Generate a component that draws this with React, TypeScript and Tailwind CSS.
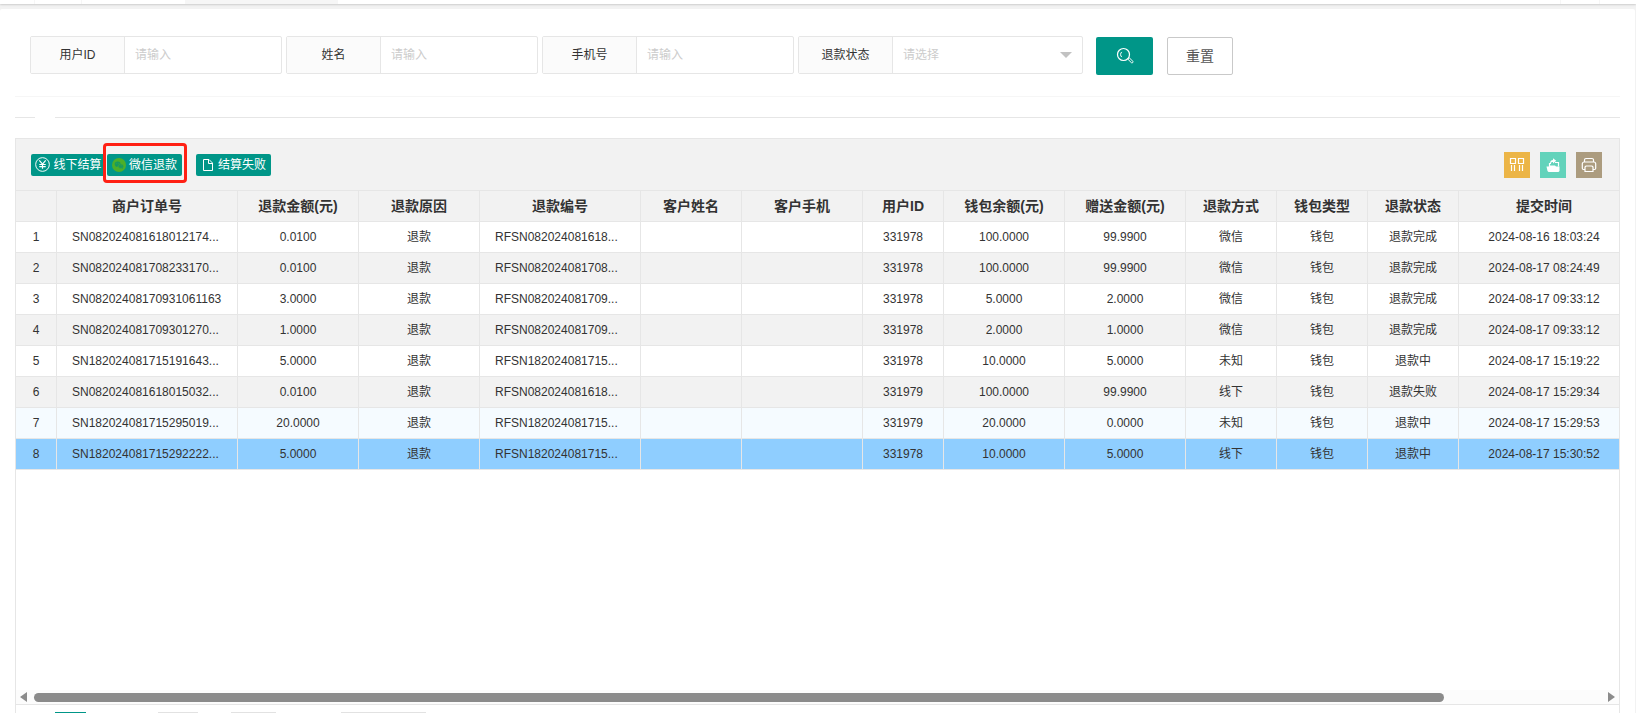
import type { ReactNode } from 'react';

interface Refund {
  orderNo: string;
  amount: string;
  reason: string;
  refundNo: string;
  customerName: string;
  customerPhone: string;
  userId: string;
  balance: string;
  gift: string;
  method: string;
  wallet: string;
  status: string;
  submittedAt: string;
}

interface Column {
  key: keyof Refund;
  title: string;
  width: string;
  cell?: string;
}

const columns: Column[] = [
  { key: 'orderNo', title: '商户订单号', width: 'w-[181px]', cell: 'pl-[15px] text-left' },
  { key: 'amount', title: '退款金额(元)', width: 'w-[121px]' },
  { key: 'reason', title: '退款原因', width: 'w-[121px]' },
  { key: 'refundNo', title: '退款编号', width: 'w-[161px]', cell: 'pl-[15px] text-left' },
  { key: 'customerName', title: '客户姓名', width: 'w-[101px]' },
  { key: 'customerPhone', title: '客户手机', width: 'w-[121px]' },
  { key: 'userId', title: '用户ID', width: 'w-[81px]' },
  { key: 'balance', title: '钱包余额(元)', width: 'w-[121px]' },
  { key: 'gift', title: '赠送金额(元)', width: 'w-[121px]' },
  { key: 'method', title: '退款方式', width: 'w-[91px]' },
  { key: 'wallet', title: '钱包类型', width: 'w-[91px]' },
  { key: 'status', title: '退款状态', width: 'w-[91px]' },
  { key: 'submittedAt', title: '提交时间', width: 'w-[171px]' },
];

const refund = (
  orderNo: string,
  amount: string,
  refundNo: string,
  userId: string,
  balance: string,
  gift: string,
  method: string,
  status: string,
  submittedAt: string
): Refund => ({
  orderNo,
  amount,
  reason: '退款',
  refundNo,
  customerName: '',
  customerPhone: '',
  userId,
  balance,
  gift,
  method,
  wallet: '钱包',
  status,
  submittedAt,
});

const refunds: Refund[] = [
  refund('SN082024081618012174...', '0.0100', 'RFSN082024081618...', '331978', '100.0000', '99.9900', '微信', '退款完成', '2024-08-16 18:03:24'),
  refund('SN082024081708233170...', '0.0100', 'RFSN082024081708...', '331978', '100.0000', '99.9900', '微信', '退款完成', '2024-08-17 08:24:49'),
  refund('SN08202408170931061163', '3.0000', 'RFSN082024081709...', '331978', '5.0000', '2.0000', '微信', '退款完成', '2024-08-17 09:33:12'),
  refund('SN082024081709301270...', '1.0000', 'RFSN082024081709...', '331978', '2.0000', '1.0000', '微信', '退款完成', '2024-08-17 09:33:12'),
  refund('SN182024081715191643...', '5.0000', 'RFSN182024081715...', '331978', '10.0000', '5.0000', '未知', '退款中', '2024-08-17 15:19:22'),
  refund('SN082024081618015032...', '0.0100', 'RFSN082024081618...', '331979', '100.0000', '99.9900', '线下', '退款失败', '2024-08-17 15:29:34'),
  refund('SN182024081715295019...', '20.0000', 'RFSN182024081715...', '331979', '20.0000', '0.0000', '未知', '退款中', '2024-08-17 15:29:53'),
  refund('SN182024081715292222...', '5.0000', 'RFSN182024081715...', '331978', '10.0000', '5.0000', '线下', '退款中', '2024-08-17 15:30:52'),
];

const HOVERED = 6;
const SELECTED = 7;

const getRowColor = (index: number) => {
  if (index === SELECTED) return 'bg-[#8fceff]';
  if (index === HOVERED) return 'bg-[#f5fbff]';
  return index % 2 ? 'bg-[#f2f2f2]' : 'bg-white';
};

function YenIcon() {
  return (
    <svg className="size-[15px]" viewBox="0 0 14 14" fill="none" stroke="currentColor" aria-hidden="true">
      <circle cx="7" cy="7" r="6.4" strokeWidth=".9" />
      <path d="M4 3.200 7 6.700l3-3.500M7 6.700v4.300M4 7h6M4 9h6" strokeWidth="1.1" />
    </svg>
  );
}

function WechatIcon() {
  return (
    <svg className="size-3.5" viewBox="0 0 14 14" aria-hidden="true">
      <circle cx="7" cy="7" r="7" fill="#4caf2a" />
      <ellipse cx="5.700" cy="5.900" rx="3" ry="2.500" fill="#169a62" />
      <ellipse cx="8.900" cy="8.200" rx="2.600" ry="2.200" fill="#169a62" stroke="#4caf2a" strokeWidth=".5" />
      <path d="M4 7.600 3.700 9.200l1.600-.9zM10 10l1 .9-.2-1.400z" fill="#169a62" />
      <g fill="#4caf2a">
        <circle cx="4.700" cy="5.200" r=".45" />
        <circle cx="6.800" cy="5.200" r=".45" />
        <circle cx="8" cy="7.800" r=".4" />
        <circle cx="9.700" cy="7.800" r=".4" />
      </g>
    </svg>
  );
}

function FileIcon() {
  return (
    <svg className="size-3.5" viewBox="0 0 14 14" fill="none" stroke="currentColor" aria-hidden="true">
      <path d="M2.500 1.500h5.500l3.500 3.500v7.500h-9zM7.500 1.500v4h4" />
    </svg>
  );
}

function SearchIcon() {
  return (
    <svg className="size-[18px]" viewBox="0 0 18 18" fill="none" stroke="currentColor" aria-hidden="true">
      <circle cx="7.500" cy="7.500" r="6" strokeWidth="1.200" />
      <path d="M5.800 4.900a3.400 3.400 0 0 0 0 5.200" />
      <path d="m11.700 12 1.400-1.400 3.700 3.700a1 1 0 0 1-1.400 1.400z" />
    </svg>
  );
}

function ColumnsIcon() {
  return (
    <svg className="size-4" viewBox="0 0 16 16" fill="none" stroke="currentColor" strokeWidth="1.200" aria-hidden="true">
      <path d="M1.500 1.500h5v5h-5zM9.500 1.500h5v5h-5z" />
      <path d="M2.500 8v6M5.500 8v6M10.500 8v6M13.500 8v6" />
    </svg>
  );
}

function ExportIcon() {
  return (
    <svg className="size-4" viewBox="0 0 16 16" fill="currentColor" aria-hidden="true">
      <path d="M1.500 9.500h2L5 8.500h5l1 1h3.500V14l-1 1h-10l-1-1z" />
      <path d="M4.500 9V6.500H6M10 5.500h3.500v4" fill="none" stroke="currentColor" strokeWidth="1.200" />
      <path d="M5 6.500C5 3.900 6.500 3 8 2.900V1.200l3.200 2.600L8 6.400V4.900C6.800 4.900 5.700 5.400 5 6.500z" />
    </svg>
  );
}

function PrintIcon() {
  return (
    <svg className="size-4" viewBox="0 0 16 16" fill="none" stroke="currentColor" strokeWidth="1.200" aria-hidden="true">
      <path d="M3.500 5V3a1.500 1.500 0 0 1 1.500-1.500h6A1.500 1.500 0 0 1 12.500 3v2" />
      <path d="M4 12.500H2.500a1.200 1.200 0 0 1-1.200-1.200V7c0-1.200.8-2 1.900-2h9.600c1.100 0 1.900.8 1.900 2v4.300a1.200 1.200 0 0 1-1.200 1.200H12" />
      <path d="M5 9h6l1 1v4.500H4V10z" />
    </svg>
  );
}

const fieldBox = 'flex h-[38px] rounded-xs border border-[#e6e6e6] text-xs';
const fieldLabel = 'flex w-[94px] items-center justify-center border-r border-[#e6e6e6] bg-[#fbfbfb] text-[#333]';

function TextField({ id, label }: { id: string; label: string }) {
  return (
    <div className={`${fieldBox} w-[252px]`}>
      <label htmlFor={id} className={fieldLabel}>
        {label}
      </label>
      <input id={id} type="text" placeholder="请输入" className="min-w-0 flex-1 px-2.5 outline-none placeholder:text-[#ccc]" />
    </div>
  );
}

function StatusField() {
  return (
    <div className={`${fieldBox} w-[285px]`}>
      <label htmlFor="status" className={fieldLabel}>
        退款状态
      </label>
      <div className="relative flex flex-1">
        <select id="status" defaultValue="" className="flex-1 appearance-none px-2.5 text-[#ccc] outline-none">
          <option value="">请选择</option>
          <option value="done">退款完成</option>
          <option value="doing">退款中</option>
          <option value="failed">退款失败</option>
        </select>
        <span className="pointer-events-none absolute top-[15px] right-2.5 border-x-6 border-t-6 border-x-transparent border-t-[#c2c2c2]" />
      </div>
    </div>
  );
}

function ToolbarButton({ icon, children }: { icon: ReactNode; children: ReactNode }) {
  return (
    <button type="button" className="flex h-[22px] w-[75px] items-center justify-center gap-[3px] rounded-xs bg-[#009688] text-xs whitespace-nowrap text-white">
      {icon}
      {children}
    </button>
  );
}

export default function App() {
  return (
    <div className="flex h-screen flex-col overflow-hidden bg-[#f2f2f2] font-['Liberation_Sans','Noto_Sans_CJK_SC',sans-serif] text-[#333]">
      {/* Borde inferior de las pestañas */}
      <div className="flex h-1 shrink-0 bg-white shadow-[0_1px_2px_rgba(0,0,0,0.15)]">
        <span className="w-[35px] border-r border-[#f6f6f6]" />
        <span className="w-[47px] border-r border-[#f6f6f6]" />
        <span className="ml-[103px] w-[153px] bg-[#f6f6f6]" />
        <span className="ml-auto w-10 border-x border-[#f6f6f6]" />
        <span className="w-9" />
      </div>

      <main className="mt-[5px] mr-px flex min-h-0 flex-1 flex-col rounded-t-xs bg-white px-[15px]">
        <form className="flex shrink-0 gap-[13px] border-b border-[#f6f6f6] pt-[27px] pb-[21px] pl-[15px]">
          <div className="flex gap-1">
            <TextField id="user-id" label="用户ID" />
            <TextField id="name" label="姓名" />
            <TextField id="phone" label="手机号" />
            <StatusField />
          </div>
          <div className="flex gap-3.5 pt-px">
            <button type="button" aria-label="搜索" className="flex h-[38px] w-[57px] items-center justify-center rounded-xs bg-[#009688] text-white">
              <SearchIcon />
            </button>
            <button type="reset" className="h-[38px] w-[66px] rounded-xs border border-[#c9c9c9] text-sm text-[#555]">
              重置
            </button>
          </div>
        </form>

        <div className="mt-5 flex shrink-0 gap-5">
          <hr className="w-5 border-[#e6e6e6]" />
          <hr className="flex-1 border-[#e6e6e6]" />
        </div>

        <section className="mt-5 flex min-h-0 flex-1 flex-col border-x border-t border-[#e6e6e6]">
          <div className="flex h-[51px] shrink-0 items-center bg-[#f2f2f2] pr-[17px] pl-[15px]">
            <ToolbarButton icon={<YenIcon />}>线下结算</ToolbarButton>
            <div className="relative ml-px">
              <ToolbarButton icon={<WechatIcon />}>微信退款</ToolbarButton>
              <span className="pointer-events-none absolute -top-[11px] -right-[5px] -bottom-[7px] -left-1 rounded-sm border-3 border-[#ff2014]" />
            </div>
            <div className="ml-3.5">
              <ToolbarButton icon={<FileIcon />}>结算失败</ToolbarButton>
            </div>
            <div className="ml-auto flex gap-2.5 text-white">
              <button type="button" aria-label="筛选列" className="flex size-[26px] items-center justify-center bg-[#ecb547]">
                <ColumnsIcon />
              </button>
              <button type="button" aria-label="导出" className="flex size-[26px] items-center justify-center bg-[#63d3bb]">
                <ExportIcon />
              </button>
              <button type="button" aria-label="打印" className="flex size-[26px] items-center justify-center bg-[#ac9c7f]">
                <PrintIcon />
              </button>
            </div>
          </div>

          <div className="min-h-0 flex-1 overflow-hidden">
            <table className="w-[1614px] table-fixed border-separate border-spacing-0 text-center">
              <thead>
                <tr className="h-8 bg-[#f2f2f2] text-sm">
                  <th className="w-[41px] border-y border-r border-[#e6e6e6]" />
                  {columns.map((col) => (
                    <th key={col.key} className={`${col.width} border-y border-r border-[#e6e6e6] p-0 font-bold whitespace-nowrap`}>
                      {col.title}
                    </th>
                  ))}
                </tr>
              </thead>
              <tbody>
                {refunds.map((row, index) => (
                  <tr key={row.orderNo} className={`h-[31px] text-xs ${getRowColor(index)}`}>
                    <td className="border-r border-b border-[#e6e6e6] p-0">{index + 1}</td>
                    {columns.map((col) => (
                      <td key={col.key} className={`border-r border-b border-[#e6e6e6] py-0 whitespace-nowrap ${col.cell ?? 'px-0'}`}>
                        {row[col.key]}
                      </td>
                    ))}
                  </tr>
                ))}
              </tbody>
            </table>
          </div>

          {/* Barra de desplazamiento horizontal */}
          <div className="flex h-3.5 shrink-0 items-center bg-[#fcfcfc] px-1">
            <span className="border-y-5 border-r-7 border-y-transparent border-r-[#8b8b8b]" />
            <div className="mx-[7px] flex-1">
              <div className="h-[9px] w-[90%] rounded-full bg-[#8b8b8b]" />
            </div>
            <span className="border-y-5 border-l-7 border-y-transparent border-l-[#8b8b8b]" />
          </div>

          {/* Paginación */}
          <div className="flex h-[9px] shrink-0 items-end border-t border-[#e6e6e6] pl-[39px]">
            <span className="h-px w-[31px] bg-[#009688]" />
            <span className="ml-[72px] h-px w-10 bg-[#e2e2e2]" />
            <span className="ml-[33px] h-px w-[45px] bg-[#e2e2e2]" />
            <span className="ml-[65px] h-px w-[85px] bg-[#e2e2e2]" />
          </div>
        </section>
      </main>
    </div>
  );
}
